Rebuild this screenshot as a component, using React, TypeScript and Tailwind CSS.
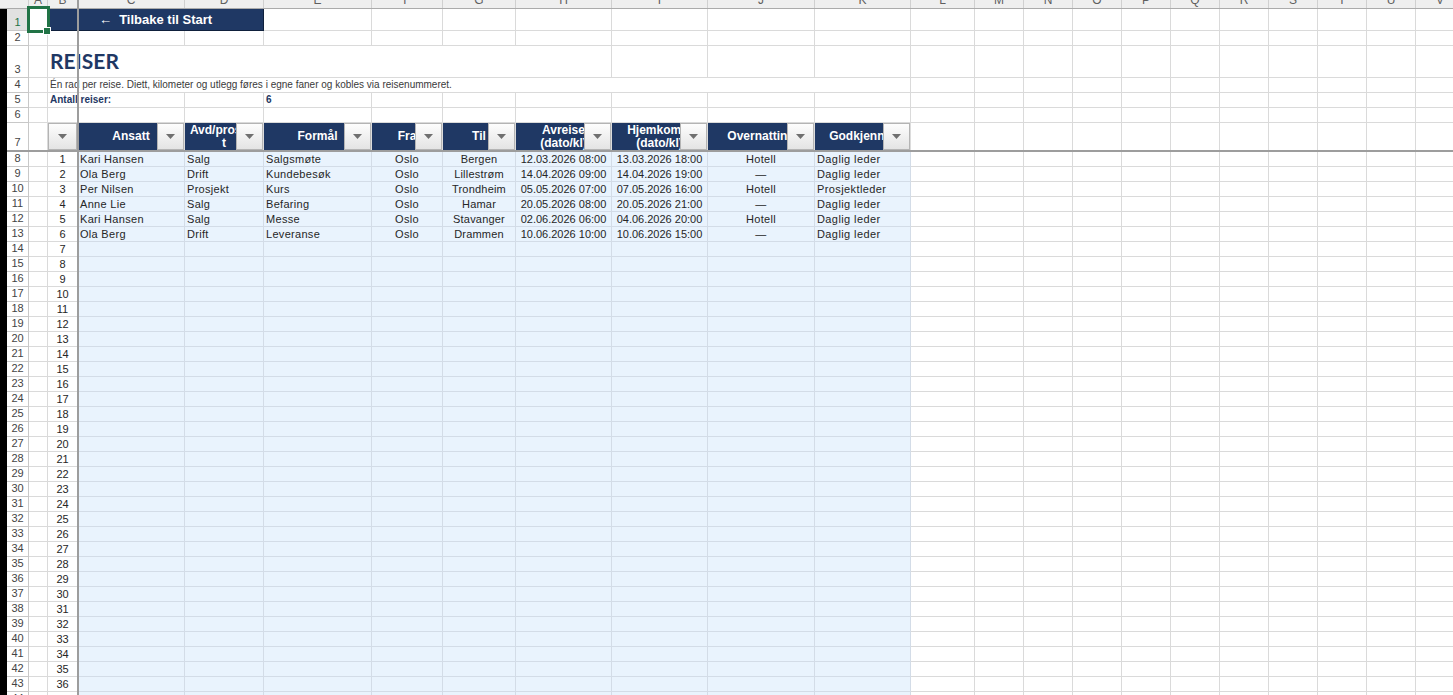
import type { ReactNode } from "react";

type Col = { id: string; w: string };

// sheet columns, widths in px (incl. right gridline)
const cols: Col[] = [
  { id: "A", w: "w-[19px]" },
  { id: "B", w: "w-[30px]" },
  { id: "C", w: "w-[107px]" },
  { id: "D", w: "w-[79px]" },
  { id: "E", w: "w-[108px]" },
  { id: "F", w: "w-[71px]" },
  { id: "G", w: "w-[73px]" },
  { id: "H", w: "w-[96px]" },
  { id: "I", w: "w-[96px]" },
  { id: "J", w: "w-[107px]" },
  { id: "K", w: "w-[96px]" },
  { id: "L", w: "w-[64px]" },
  { id: "M", w: "w-[49px]" },
  { id: "N", w: "w-[49px]" },
  { id: "O", w: "w-[49px]" },
  { id: "P", w: "w-[49px]" },
  { id: "Q", w: "w-[49px]" },
  { id: "R", w: "w-[49px]" },
  { id: "S", w: "w-[49px]" },
  { id: "T", w: "w-[49px]" },
  { id: "U", w: "w-[49px]" },
  { id: "V", w: "w-[49px]" },
];

type Trip = {
  ansatt: string;
  avd: string;
  formal: string;
  fra: string;
  til: string;
  avreise: string;
  hjemkomst: string;
  overnatting: string;
  godkjenner: string;
};

const trips: Trip[] = [
  { ansatt: "Kari Hansen", avd: "Salg", formal: "Salgsmøte", fra: "Oslo", til: "Bergen", avreise: "12.03.2026 08:00", hjemkomst: "13.03.2026 18:00", overnatting: "Hotell", godkjenner: "Daglig leder" },
  { ansatt: "Ola Berg", avd: "Drift", formal: "Kundebesøk", fra: "Oslo", til: "Lillestrøm", avreise: "14.04.2026 09:00", hjemkomst: "14.04.2026 19:00", overnatting: "—", godkjenner: "Daglig leder" },
  { ansatt: "Per Nilsen", avd: "Prosjekt", formal: "Kurs", fra: "Oslo", til: "Trondheim", avreise: "05.05.2026 07:00", hjemkomst: "07.05.2026 16:00", overnatting: "Hotell", godkjenner: "Prosjektleder" },
  { ansatt: "Anne Lie", avd: "Salg", formal: "Befaring", fra: "Oslo", til: "Hamar", avreise: "20.05.2026 08:00", hjemkomst: "20.05.2026 21:00", overnatting: "—", godkjenner: "Daglig leder" },
  { ansatt: "Kari Hansen", avd: "Salg", formal: "Messe", fra: "Oslo", til: "Stavanger", avreise: "02.06.2026 06:00", hjemkomst: "04.06.2026 20:00", overnatting: "Hotell", godkjenner: "Daglig leder" },
  { ansatt: "Ola Berg", avd: "Drift", formal: "Leveranse", fra: "Oslo", til: "Drammen", avreise: "10.06.2026 10:00", hjemkomst: "10.06.2026 15:00", overnatting: "—", godkjenner: "Daglig leder" },
];

type Tone = "plain" | "blue" | "navy" | "link";

const toneCls: Record<Tone, string> = {
  plain: "bg-white border-[#dadada]",
  blue: "bg-[#e9f3fd] border-[#d3dce7]",
  navy: "bg-[#1f3864] border-[#dcdcdc]",
  link: "bg-[#1f3864] border-[#0f203c]",
};

function Cell({
  w,
  tone = "plain",
  bottom = true,
  className = "",
  children,
}: {
  w: string;
  tone?: Tone;
  bottom?: boolean;
  className?: string;
  children?: ReactNode;
}) {
  return (
    <div
      className={`${w} ${toneCls[tone]} ${bottom ? "border-r border-b" : "border-r"} relative h-full shrink-0 overflow-hidden ${className}`}
    >
      {children}
    </div>
  );
}

// empty cells from column index `from` to the right edge
function Blank({ from, bottom = true }: { from: number; bottom?: boolean }) {
  return (
    <>
      {cols.slice(from).map((c) => (
        <Cell key={c.id} w={c.w} bottom={bottom} />
      ))}
    </>
  );
}

function RowHead({ n, active = false, bottom = true }: { n: number; active?: boolean; bottom?: boolean }) {
  return (
    <div
      className={`flex h-full w-[22px] shrink-0 items-end justify-center border-r border-[#c8c8c8] pb-[1px] text-[11px] leading-[13px] ${
        bottom ? "border-b" : ""
      } ${active ? "bg-[#e1e1e1] text-[#217346]" : "bg-white text-[#444444]"}`}
    >
      {n}
    </div>
  );
}

function FilterBtn({ full = false }: { full?: boolean }) {
  return (
    <div
      className={`absolute top-0 flex h-full items-center justify-center border border-[#b4b4b4] bg-linear-to-b from-[#fdfdfd] to-[#e4e4e4] ${
        full ? "left-0 right-0" : "right-0 w-[27px]"
      }`}
    >
      <svg width="9" height="5" viewBox="0 0 9 5">
        <path d="M0 0h9L4.5 5z" fill="#6f6f6f" />
      </svg>
    </div>
  );
}

function HeadCell({ w, lines }: { w: string; lines: string[] }) {
  return (
    <Cell w={w} tone="navy" bottom={false} className="flex flex-col items-center justify-center whitespace-nowrap text-[12px] font-bold leading-[13px] text-white">
      {lines.map((l) => (
        <div key={l}>{l}</div>
      ))}
      <FilterBtn />
    </Cell>
  );
}

function TripRow({ row }: { row: number }) {
  const nr = row - 7;
  const t = trips[nr - 1];
  const txt = "flex items-center whitespace-nowrap text-[11px] leading-none text-[#262626]";
  return (
    <div className="flex h-[15px]">
      <RowHead n={row} />
      <Cell w={cols[0].w} />
      <Cell w={cols[1].w} className={`${txt} justify-center`}>{nr}</Cell>
      <Cell w={cols[2].w} tone="blue" className={`${txt} pl-[2px] tracking-[0.3px]`}>{t?.ansatt}</Cell>
      <Cell w={cols[3].w} tone="blue" className={`${txt} pl-[2px] tracking-[0.3px]`}>{t?.avd}</Cell>
      <Cell w={cols[4].w} tone="blue" className={`${txt} pl-[2px] tracking-[0.3px]`}>{t?.formal}</Cell>
      <Cell w={cols[5].w} tone="blue" className={`${txt} justify-center tracking-[0.3px]`}>{t?.fra}</Cell>
      <Cell w={cols[6].w} tone="blue" className={`${txt} justify-center tracking-[0.2px]`}>{t?.til}</Cell>
      <Cell w={cols[7].w} tone="blue" className={`${txt} justify-center`}>{t?.avreise}</Cell>
      <Cell w={cols[8].w} tone="blue" className={`${txt} justify-center`}>{t?.hjemkomst}</Cell>
      <Cell w={cols[9].w} tone="blue" className={`${txt} justify-center tracking-[0.3px]`}>{t?.overnatting}</Cell>
      <Cell w={cols[10].w} tone="blue" className={`${txt} pl-[2px] tracking-[0.4px]`}>{t?.godkjenner}</Cell>
      <Blank from={11} />
    </div>
  );
}

export default function App() {
  const dataRows = Array.from({ length: 37 }, (_, i) => i + 8);

  return (
    <div className="relative h-[695px] w-[1453px] overflow-hidden bg-white font-['Liberation_Sans',Arial,sans-serif]">
      {/* column letters, scrolled so only their lower edge shows */}
      <div className="flex h-[9px] border-b border-[#ababab] bg-[#efefef]">
        <div className="w-[29px] shrink-0 border-r border-[#d0d0d0]" />
        {cols.map((c) => (
          <div key={c.id} className={`${c.w} shrink-0 overflow-hidden border-r border-[#d0d0d0] text-center text-[12px] leading-[12px] text-[#5f5f5f]`}>
            <div className="-mt-[6px]">{c.id}</div>
          </div>
        ))}
      </div>

      <div className="flex">
        <div className="w-[7px] shrink-0 bg-black" />
        <div className="flex flex-col">
          {/* 1: back link */}
          <div className="flex h-[22px]">
            <RowHead n={1} active />
            <Cell w={cols[0].w} />
            <Cell w="w-[216px]" tone="link" className="flex items-center justify-center text-[13px] font-bold text-white">
              ←&nbsp;&nbsp;Tilbake til Start
            </Cell>
            <Blank from={4} />
          </div>

          {/* 2 */}
          <div className="flex h-[15px]">
            <RowHead n={2} />
            <Blank from={0} />
          </div>

          {/* 3: title */}
          <div className="flex h-[32px]">
            <RowHead n={3} />
            <Cell w={cols[0].w} />
            <Cell w="w-[564px]" className="flex items-end pb-[6px] pl-[2px] font-['Lato',sans-serif] text-[21px] font-bold leading-none text-[#1f3864]">
              REISER
            </Cell>
            <Blank from={8} />
          </div>

          {/* 4: description */}
          <div className="flex h-[15px]">
            <RowHead n={4} />
            <Cell w={cols[0].w} />
            <Cell w="w-[863px]" className="flex items-center whitespace-nowrap pl-[2px] text-[10px] leading-[14px] text-[#3a3a3a]">
              Én rad per reise. Diett, kilometer og utlegg føres i egne faner og kobles via reisenummeret.
            </Cell>
            <Blank from={11} />
          </div>

          {/* 5: count */}
          <div className="flex h-[15px]">
            <RowHead n={5} />
            <Cell w={cols[0].w} />
            <Cell w="w-[137px]" className="flex items-end whitespace-nowrap pb-[2px] pl-[2px] text-[10px] font-bold leading-none text-[#1f3864]">
              Antall reiser:
            </Cell>
            <Cell w={cols[3].w} />
            <Cell w={cols[4].w} className="flex items-end pb-[2px] pl-[2px] text-[10px] font-bold leading-none text-[#1f3864]">
              6
            </Cell>
            <Blank from={5} />
          </div>

          {/* 6 */}
          <div className="flex h-[15px]">
            <RowHead n={6} />
            <Blank from={0} />
          </div>

          {/* 7: table header, frozen below */}
          <div className="flex h-[29px] border-b-2 border-[#9d9d9d]">
            <RowHead n={7} bottom={false} />
            <Cell w={cols[0].w} bottom={false} />
            <Cell w={cols[1].w} bottom={false}>
              <FilterBtn full />
            </Cell>
            <HeadCell w={cols[2].w} lines={["Ansatt"]} />
            <HeadCell w={cols[3].w} lines={["Avd/prosjek", "t"]} />
            <HeadCell w={cols[4].w} lines={["Formål"]} />
            <HeadCell w={cols[5].w} lines={["Fra"]} />
            <HeadCell w={cols[6].w} lines={["Til"]} />
            <HeadCell w={cols[7].w} lines={["Avreise", "(dato/kl)"]} />
            <HeadCell w={cols[8].w} lines={["Hjemkomst", "(dato/kl)"]} />
            <HeadCell w={cols[9].w} lines={["Overnatting"]} />
            <HeadCell w={cols[10].w} lines={["Godkjenner"]} />
            <Blank from={11} bottom={false} />
          </div>

          {dataRows.map((r) => (
            <TripRow key={r} row={r} />
          ))}
        </div>
      </div>

      {/* frozen pane split */}
      <div className="absolute bottom-0 left-[77px] top-0 w-[2px] bg-[#9d9d9d]" />

      {/* active cell A1 */}
      <div className="absolute left-[27px] top-[6px] h-[27px] w-[23px] border-[3px] border-[#217346]" />
      <div className="absolute left-[43px] top-[27px] h-[8px] w-[8px] border border-white bg-[#217346]" />
    </div>
  );
}
